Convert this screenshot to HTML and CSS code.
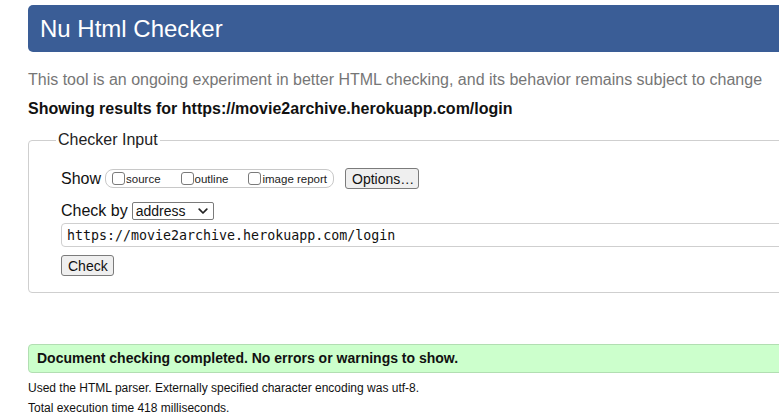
FILE: index.html
```html
<!DOCTYPE html>
<html lang="en">
<head>
<meta charset="utf-8">
<title>Nu Html Checker</title>
<link rel="stylesheet" href="styles.css">
</head>
<body>
<div class="page">
  <h1 class="banner">Nu Html Checker</h1>
  <p class="intro">This tool is an ongoing experiment in better HTML checking, and its behavior remains subject to change</p>
  <p class="showing">Showing results for https://movie2archive.herokuapp.com/login</p>
  <form class="form">
    <fieldset class="checker">
      <legend class="legend">Checker Input</legend>
      <div class="row show-row">
        <span class="label">Show</span>
        <span class="pill">
          <label class="opt"><input type="checkbox" class="cb">source</label>
          <label class="opt"><input type="checkbox" class="cb">outline</label>
          <label class="opt"><input type="checkbox" class="cb">image report</label>
        </span>
        <button type="button" class="btn options">Options…</button>
      </div>
      <div class="row by-row">
        <span class="label">Check by</span>
        <span class="select-wrap">
          <select class="select"><option>address</option></select>
          <svg class="chev" width="10" height="7" viewBox="0 0 10 7"><path d="M1.2 1.2 L5 5 L8.8 1.2" fill="none" stroke="#222" stroke-width="1.7" stroke-linecap="round" stroke-linejoin="round"/></svg>
        </span>
      </div>
      <input class="url" type="text" value="https://movie2archive.herokuapp.com/login">
      <div class="row submit-row">
        <button type="button" class="btn check">Check</button>
      </div>
    </fieldset>
  </form>
  <p class="success">Document checking completed. No errors or warnings to show.</p>
  <p class="details">Used the HTML parser. Externally specified character encoding was utf-8.</p>
  <p class="details">Total execution time 418 milliseconds.</p>
</div>
</body>
</html>
```
FILE: styles.css
```css
html, body {
  margin: 0;
  padding: 0;
  overflow: hidden;
  background: #fff;
}
body {
  font-family: "Liberation Sans", Arial, Helvetica, sans-serif;
  color: #111;
}
.page {
  width: 1100px;
  padding-left: 28px;
  padding-top: 5px;
}
.banner {
  margin: 0;
  height: 47px;
  line-height: 47px;
  padding-left: 12px;
  background: #3a5d96;
  color: #fff;
  font-size: 24px;
  font-weight: normal;
  border-radius: 5px;
}
.intro {
  margin: 18px 0 0;
  font-size: 16px;
  line-height: 20px;
  color: #767676;
}
.showing {
  margin: 9px 0 0;
  font-size: 16px;
  line-height: 20px;
  font-weight: bold;
  color: #111;
}
.form {
  margin: 11px 0 0;
}
.checker {
  margin: 0;
  border: 1px solid #cfcfcf;
  border-radius: 4px;
  padding: 18px 0 16px 32px;
  display: flex;
  flex-direction: column;
  align-items: flex-start;
}
.legend {
  font-size: 16px;
  line-height: 20px;
  padding: 0 2px;
  margin-left: -5px;
  color: #222;
}
.row {
  display: flex;
  align-items: center;
}
.label {
  font-size: 16px;
  color: #111;
}
.show-row {
  height: 21px;
}
.pill {
  display: inline-flex;
  align-items: center;
  height: 17px;
  border: 1px solid #c8c8c8;
  border-radius: 8px;
  margin-left: 4px;
  padding: 0 6px;
  gap: 20px;
}
.opt {
  display: inline-flex;
  align-items: center;
  font-size: 11.5px;
  color: #222;
}
.cb {
  appearance: none;
  -webkit-appearance: none;
  width: 13px;
  height: 13px;
  margin: 0 1px 0 0;
  border: 1px solid #7a7a7a;
  border-radius: 3px;
  background: #fff;
  box-sizing: border-box;
}
.btn {
  font-family: "Liberation Sans", Arial, Helvetica, sans-serif;
  font-size: 14px;
  height: 21px;
  padding: 0 6px;
  border: 1px solid #7b7b7b;
  border-radius: 3px;
  background: #efefef;
  color: #111;
  box-sizing: border-box;
}
.options {
  margin-left: 11px;
  width: 74px;
}
.by-row {
  margin-top: 12px;
  height: 20px;
}
.select-wrap {
  position: relative;
  display: inline-block;
  margin-left: 4px;
}
.select {
  appearance: none;
  -webkit-appearance: none;
  display: block;
  width: 82px;
  height: 18px;
  border: 1px solid #7b7b7b;
  border-radius: 2px;
  background: #fff;
  font-family: "Liberation Sans", Arial, Helvetica, sans-serif;
  font-size: 14px;
  color: #111;
  padding: 0 0 0 3px;
  box-sizing: border-box;
}
.chev {
  position: absolute;
  right: 6px;
  top: 6px;
}
.url {
  margin-top: 2px;
  width: 760px;
  height: 24px;
  box-sizing: border-box;
  border: 1px solid #cfcfcf;
  border-radius: 4px;
  padding: 0 5px;
  font-family: "DejaVu Sans Mono", Menlo, monospace;
  font-size: 13.3px;
  color: #111;
  background: #fff;
}
.submit-row {
  margin-top: 8px;
}
.check {
  width: 53px;
}
.success {
  margin: 51px 0 0;
  height: 29px;
  line-height: 27px;
  box-sizing: border-box;
  border: 1px solid #b2deb2;
  border-radius: 4px;
  background: #ccffcc;
  padding-left: 8px;
  font-size: 14px;
  font-weight: bold;
  color: #111;
}
.details {
  margin: 8px 0 0;
  font-size: 12px;
  line-height: 15px;
  color: #111;
}
.details + .details {
  margin-top: 5px;
}
```
